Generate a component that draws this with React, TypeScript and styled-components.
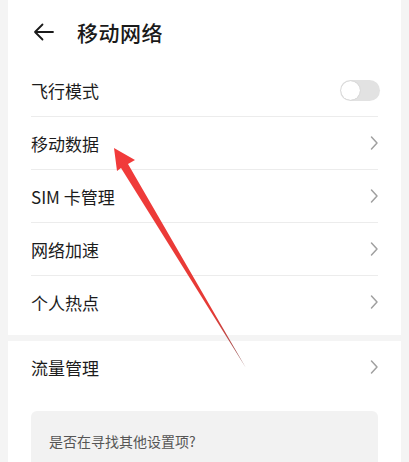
import React from 'react';
import styled, { createGlobalStyle } from 'styled-components';

// Lignes de la première carte
type Row = {
  label: string;
  kind: 'toggle' | 'link';
};

const rows: Row[] = [
  { label: '飞行模式', kind: 'toggle' },
  { label: '移动数据', kind: 'link' },
  { label: 'SIM 卡管理', kind: 'link' },
  { label: '网络加速', kind: 'link' },
  { label: '个人热点', kind: 'link' },
];

const GlobalStyle = createGlobalStyle`
  html, body {
    margin: 0;
    padding: 0;
    background: #f4f4f4;
    font-family: 'Noto Sans CJK SC', 'Noto Sans', sans-serif;
  }
`;

const Page = styled.div`
  position: relative;
  width: 409px;
  height: 462px;
  overflow: hidden;
  background: #f4f4f4;
  display: flex;
  flex-direction: column;
  gap: 6px;
  padding: 0 8px;
  box-sizing: border-box;
`;

const Card = styled.div<{ $grow?: boolean }>`
  background: #fff;
  display: flex;
  flex-direction: column;
  padding: 0 23px;
  flex: ${props => (props.$grow ? 1 : 'none')};
`;

const Header = styled.div`
  height: 64px;
  display: flex;
  align-items: center;
  gap: 22px;
  padding-left: 2px;
`;

const Title = styled.h1`
  margin: 0;
  font-size: 21px;
  font-weight: 500;
  color: #1a1a1a;
  letter-spacing: 0.5px;
`;

const List = styled.div`
  display: flex;
  flex-direction: column;
  padding-bottom: 6px;
`;

const RowItem = styled.div<{ $last?: boolean }>`
  height: 52px;
  display: flex;
  align-items: center;
  justify-content: space-between;
  border-bottom: 1px solid ${props => (props.$last ? 'transparent' : '#ececec')};
`;

const Label = styled.span`
  font-size: 17px;
  color: #1c1c1c;
`;

const Track = styled.div`
  width: 40px;
  height: 21px;
  border-radius: 11px;
  background: #e2e2e2;
  position: relative;
  margin-right: -2px;
`;

const Knob = styled.div`
  position: absolute;
  left: 1px;
  top: 1px;
  width: 19px;
  height: 19px;
  border-radius: 50%;
  background: #fff;
  box-shadow: 0 0 1px rgba(0, 0, 0, 0.25);
`;

const Hint = styled.div`
  margin-top: 17px;
  background: #f2f2f2;
  border-radius: 6px 6px 0 0;
  height: 80px;
  padding: 20px 18px 0;
  box-sizing: border-box;
  font-size: 14px;
  color: #555;
`;

const Arrow = styled.svg`
  position: absolute;
  left: 0;
  top: 0;
  pointer-events: none;
`;

const Chevron = () => (
  <svg width="10" height="16" viewBox="0 0 10 16" style={{ marginRight: -1 }}>
    <path d="M2.5 2 L8 8 L2.5 14" fill="none" stroke="#a0a0a0" strokeWidth="1.5" strokeLinecap="round" strokeLinejoin="round" />
  </svg>
);

const BackIcon = () => (
  <svg width="22" height="18" viewBox="0 0 22 18">
    <path d="M20 9 H2 M9.5 1.5 L2 9 L9.5 16.5" fill="none" stroke="#1a1a1a" strokeWidth="1.8" strokeLinecap="round" strokeLinejoin="round" />
  </svg>
);

const App: React.FC = () => {
  return (
    <>
      <GlobalStyle />
      <Page>
        <Card>
          <Header>
            <BackIcon />
            <Title>移动网络</Title>
          </Header>
          <List>
            {rows.map((row, i) => (
              <RowItem key={row.label} $last={i === rows.length - 1}>
                <Label>{row.label}</Label>
                {row.kind === 'toggle' ? (
                  <Track>
                    <Knob />
                  </Track>
                ) : (
                  <Chevron />
                )}
              </RowItem>
            ))}
          </List>
        </Card>
        <Card $grow>
          <RowItem $last>
            <Label>流量管理</Label>
            <Chevron />
          </RowItem>
          <Hint>是否在寻找其他设置项?</Hint>
        </Card>
        <Arrow width="409" height="462" viewBox="0 0 409 462">
          <defs>
            <linearGradient id="shaft" x1="114" y1="148" x2="246" y2="368" gradientUnits="userSpaceOnUse">
              <stop offset="0" stopColor="#f23b3b" />
              <stop offset="0.75" stopColor="#e53a35" />
              <stop offset="1" stopColor="#8a5a5a" />
            </linearGradient>
          </defs>
          <polygon
            points="114,148 135,160 128,164 246,368 121,168 117,171"
            fill="url(#shaft)"
          />
        </Arrow>
      </Page>
    </>
  );
};

export default App;
